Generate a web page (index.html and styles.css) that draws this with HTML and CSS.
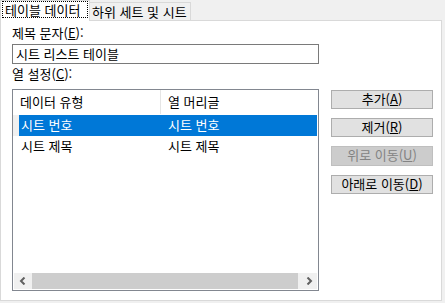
FILE: index.html
```html
<!DOCTYPE html>
<html lang="ko">
<head>
<meta charset="utf-8">
<link rel="stylesheet" href="styles.css">
</head>
<body>
<div class="tabs">
  <div class="tab tab-active"><span class="focus">테이블 데이터</span></div>
  <div class="tab">하위 세트 및 시트</div>
</div>
<div class="panel">
  <div class="label">제목 문자(<u>E</u>):</div>
  <div class="textbox">시트 리스트 테이블</div>
  <div class="label label2">열 설정(<u>C</u>):</div>
  <div class="main">
    <div class="list">
      <div class="list-header">
        <div class="hcell hcell1">데이터 유형</div>
        <div class="hcell hcell2">열 머리글</div>
      </div>
      <div class="row row-selected">
        <div class="stub"></div>
        <div class="cell cell1">시트 번호</div>
        <div class="cell cell2">시트 번호</div>
      </div>
      <div class="row">
        <div class="stub"></div>
        <div class="cell cell1">시트 제목</div>
        <div class="cell cell2">시트 제목</div>
      </div>
      <div class="spacer"></div>
      <div class="hscroll">
        <div class="sbtn">
          <svg width="8" height="8" viewBox="0 0 8 8"><path d="M5.5 0.5 L2 4 L5.5 7.5" fill="none" stroke="#606060" stroke-width="2"/></svg>
        </div>
        <div class="thumb"></div>
        <div class="sbtn">
          <svg width="8" height="8" viewBox="0 0 8 8"><path d="M2.5 0.5 L6 4 L2.5 7.5" fill="none" stroke="#606060" stroke-width="2"/></svg>
        </div>
      </div>
    </div>
    <div class="buttons">
      <div class="btn">추가(<u>A</u>)</div>
      <div class="btn">제거(<u>R</u>)</div>
      <div class="btn btn-disabled">위로 이동(<u>U</u>)</div>
      <div class="btn">아래로 이동(<u>D</u>)</div>
    </div>
  </div>
</div>
</body>
</html>
```

FILE: styles.css
```css
html, body {
  margin: 0;
  padding: 0;
}
body {
  width: 445px;
  height: 303px;
  background: #f0f0f0;
  font-family: "Noto Sans CJK KR", "Noto Sans", sans-serif;
  font-size: 13px;
  color: #000;
  overflow: hidden;
}
u {
  text-decoration: underline;
  text-underline-offset: 1px;
}
.tabs {
  display: flex;
  align-items: flex-end;
  height: 20px;
}
.tab {
  height: 17px;
  line-height: 17px;
  padding: 0 3px 0 2px;
  border: 1px solid #d9d9d9;
  border-bottom: none;
  border-left: none;
  background: #f0f0f0;
  white-space: nowrap;
}
.tab-active {
  height: 21px;
  width: 90px;
  box-sizing: border-box;
  margin-bottom: -1px;
  padding: 1px;
  background: #fff;
  border-left: 1px solid #d9d9d9;
  position: relative;
  z-index: 1;
  line-height: normal;
}
.focus {
  display: block;
  height: 17px;
  line-height: 16px;
  border: 1px dotted #000;
  box-sizing: border-box;
  padding-left: 2px;
  margin: -1px 0 0 0;
  white-space: nowrap;
}
.panel {
  width: 442px;
  height: 281px;
  box-sizing: border-box;
  border: 1px solid #d9d9d9;
  background: #fff;
  padding: 4px 0 0 11px;
  display: flex;
  flex-direction: column;
}
.label {
  height: 16px;
  line-height: 16px;
}
.label2 {
  margin-top: 2px;
}
.textbox {
  margin-top: 3px;
  width: 307px;
  height: 20px;
  box-sizing: border-box;
  border: 1px solid #7a7a7a;
  line-height: 17px;
  padding-left: 3px;
}
.main {
  margin-top: 7px;
  display: flex;
  gap: 12px;
  align-items: flex-start;
}
.list {
  width: 307px;
  height: 202px;
  box-sizing: border-box;
  border: 1px solid #828790;
  display: flex;
  flex-direction: column;
}
.list-header {
  height: 25px;
  display: flex;
  flex: none;
}
.hcell {
  line-height: 24px;
  height: 24px;
  box-sizing: border-box;
}
.hcell1 {
  width: 148px;
  padding-left: 7px;
  border-right: 1px solid #e5e5e5;
}
.hcell2 {
  padding-left: 7px;
}
.row {
  height: 21px;
  line-height: 20px;
  display: flex;
  flex: none;
}
.stub {
  width: 6px;
}
.row-selected .stub {
  background: #f0f0f0;
}
.cell {
  box-sizing: border-box;
}
.cell1 {
  width: 141px;
  padding-left: 2px;
}
.cell2 {
  width: 157px;
  padding-left: 8px;
}
.row-selected .cell {
  background: #0078d7;
  color: #fff;
}
.spacer {
  flex: 1;
}
.hscroll {
  flex: none;
  height: 16px;
  margin: 0 1px 1px 1px;
  background: #f0f0f0;
  display: flex;
}
.sbtn {
  width: 17px;
  display: flex;
  align-items: center;
  justify-content: center;
}
.thumb {
  flex: 1;
  background: #cdcdcd;
  margin-left: 1px;
  margin-right: 2px;
}
.buttons {
  margin-top: 1px;
  display: flex;
  flex-direction: column;
  gap: 9px;
}
.btn {
  width: 102px;
  height: 19px;
  box-sizing: border-box;
  border: 1px solid #adadad;
  background: #e1e1e1;
  text-align: center;
  line-height: 16px;
}
.btn-disabled {
  height: 20px;
  background: #cccccc;
  border-color: #bfbfbf;
  color: #838383;
}
```
